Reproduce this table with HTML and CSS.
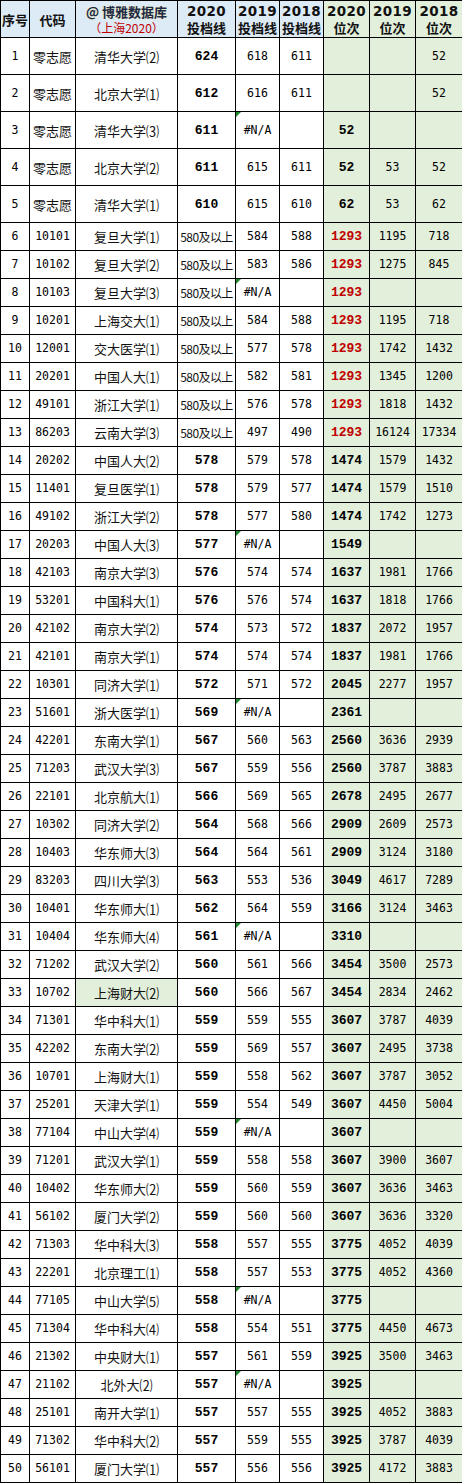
FILE: index.html
```html
<!DOCTYPE html>
<html lang="zh-CN">
<head>
<meta charset="utf-8">
<title>投档线</title>
<link rel="stylesheet" href="styles.css">
</head>
<body>
<table class="sheet">
<colgroup>
<col class="w-no"><col class="w-code"><col class="w-name"><col class="w-s20"><col class="w-s19"><col class="w-s18"><col class="w-r20"><col class="w-r19"><col class="w-r18">
</colgroup>
<thead>
<tr class="head">
<th class="hb">序号</th>
<th class="hb">代码</th>
<th class="hb brand"><span class="brand-top">@ 博雅数据库</span><span class="brand-sub">（上海2020）</span></th>
<th class="hb"><span class="yr">2020</span><span class="lbl">投档线</span></th>
<th class="hb"><span class="yr">2019</span><span class="lbl">投档线</span></th>
<th class="hb"><span class="yr">2018</span><span class="lbl">投档线</span></th>
<th class="hg"><span class="yr">2020</span><span class="lbl">位次</span></th>
<th class="hg"><span class="yr">2019</span><span class="lbl">位次</span></th>
<th class="hg"><span class="yr">2018</span><span class="lbl">位次</span></th>
</tr>
</thead>
<tbody>
<tr class="tall"><td class="n">1</td><td class="t">零志愿</td><td class="t">清华大学⑵</td><td class="n b">624</td><td class="n">618</td><td class="n">611</td><td class="g"></td><td class="g"></td><td class="g n">52</td></tr>
<tr class="tall"><td class="n">2</td><td class="t">零志愿</td><td class="t">北京大学⑴</td><td class="n b">612</td><td class="n">616</td><td class="n">611</td><td class="g"></td><td class="g"></td><td class="g n">52</td></tr>
<tr class="tall"><td class="n">3</td><td class="t">零志愿</td><td class="t">清华大学⑶</td><td class="n b">611</td><td class="n na">#N/A</td><td></td><td class="g n b">52</td><td class="g"></td><td class="g"></td></tr>
<tr class="tall"><td class="n">4</td><td class="t">零志愿</td><td class="t">北京大学⑵</td><td class="n b">611</td><td class="n">615</td><td class="n">611</td><td class="g n b">52</td><td class="g n">53</td><td class="g n">52</td></tr>
<tr class="tall"><td class="n">5</td><td class="t">零志愿</td><td class="t">清华大学⑴</td><td class="n b">610</td><td class="n">615</td><td class="n">610</td><td class="g n b">62</td><td class="g n">53</td><td class="g n">62</td></tr>
<tr><td class="n">6</td><td class="n">10101</td><td class="t">复旦大学⑴</td><td class="t up">580及以上</td><td class="n">584</td><td class="n">588</td><td class="g n b r">1293</td><td class="g n">1195</td><td class="g n">718</td></tr>
<tr><td class="n">7</td><td class="n">10102</td><td class="t">复旦大学⑵</td><td class="t up">580及以上</td><td class="n">583</td><td class="n">586</td><td class="g n b r">1293</td><td class="g n">1275</td><td class="g n">845</td></tr>
<tr><td class="n">8</td><td class="n">10103</td><td class="t">复旦大学⑶</td><td class="t up">580及以上</td><td class="n na">#N/A</td><td></td><td class="g n b r">1293</td><td class="g"></td><td class="g"></td></tr>
<tr><td class="n">9</td><td class="n">10201</td><td class="t">上海交大⑴</td><td class="t up">580及以上</td><td class="n">584</td><td class="n">588</td><td class="g n b r">1293</td><td class="g n">1195</td><td class="g n">718</td></tr>
<tr><td class="n">10</td><td class="n">12001</td><td class="t">交大医学⑴</td><td class="t up">580及以上</td><td class="n">577</td><td class="n">578</td><td class="g n b r">1293</td><td class="g n">1742</td><td class="g n">1432</td></tr>
<tr><td class="n">11</td><td class="n">20201</td><td class="t">中国人大⑴</td><td class="t up">580及以上</td><td class="n">582</td><td class="n">581</td><td class="g n b r">1293</td><td class="g n">1345</td><td class="g n">1200</td></tr>
<tr><td class="n">12</td><td class="n">49101</td><td class="t">浙江大学⑴</td><td class="t up">580及以上</td><td class="n">576</td><td class="n">578</td><td class="g n b r">1293</td><td class="g n">1818</td><td class="g n">1432</td></tr>
<tr><td class="n">13</td><td class="n">86203</td><td class="t">云南大学⑶</td><td class="t up">580及以上</td><td class="n">497</td><td class="n">490</td><td class="g n b r">1293</td><td class="g n">16124</td><td class="g n">17334</td></tr>
<tr><td class="n">14</td><td class="n">20202</td><td class="t">中国人大⑵</td><td class="n b">578</td><td class="n">579</td><td class="n">578</td><td class="g n b">1474</td><td class="g n">1579</td><td class="g n">1432</td></tr>
<tr><td class="n">15</td><td class="n">11401</td><td class="t">复旦医学⑴</td><td class="n b">578</td><td class="n">579</td><td class="n">577</td><td class="g n b">1474</td><td class="g n">1579</td><td class="g n">1510</td></tr>
<tr><td class="n">16</td><td class="n">49102</td><td class="t">浙江大学⑵</td><td class="n b">578</td><td class="n">577</td><td class="n">580</td><td class="g n b">1474</td><td class="g n">1742</td><td class="g n">1273</td></tr>
<tr><td class="n">17</td><td class="n">20203</td><td class="t">中国人大⑶</td><td class="n b">577</td><td class="n na">#N/A</td><td></td><td class="g n b">1549</td><td class="g"></td><td class="g"></td></tr>
<tr><td class="n">18</td><td class="n">42103</td><td class="t">南京大学⑶</td><td class="n b">576</td><td class="n">574</td><td class="n">574</td><td class="g n b">1637</td><td class="g n">1981</td><td class="g n">1766</td></tr>
<tr><td class="n">19</td><td class="n">53201</td><td class="t">中国科大⑴</td><td class="n b">576</td><td class="n">576</td><td class="n">574</td><td class="g n b">1637</td><td class="g n">1818</td><td class="g n">1766</td></tr>
<tr><td class="n">20</td><td class="n">42102</td><td class="t">南京大学⑵</td><td class="n b">574</td><td class="n">573</td><td class="n">572</td><td class="g n b">1837</td><td class="g n">2072</td><td class="g n">1957</td></tr>
<tr><td class="n">21</td><td class="n">42101</td><td class="t">南京大学⑴</td><td class="n b">574</td><td class="n">574</td><td class="n">574</td><td class="g n b">1837</td><td class="g n">1981</td><td class="g n">1766</td></tr>
<tr><td class="n">22</td><td class="n">10301</td><td class="t">同济大学⑴</td><td class="n b">572</td><td class="n">571</td><td class="n">572</td><td class="g n b">2045</td><td class="g n">2277</td><td class="g n">1957</td></tr>
<tr><td class="n">23</td><td class="n">51601</td><td class="t">浙大医学⑴</td><td class="n b">569</td><td class="n na">#N/A</td><td></td><td class="g n b">2361</td><td class="g"></td><td class="g"></td></tr>
<tr><td class="n">24</td><td class="n">42201</td><td class="t">东南大学⑴</td><td class="n b">567</td><td class="n">560</td><td class="n">563</td><td class="g n b">2560</td><td class="g n">3636</td><td class="g n">2939</td></tr>
<tr><td class="n">25</td><td class="n">71203</td><td class="t">武汉大学⑶</td><td class="n b">567</td><td class="n">559</td><td class="n">556</td><td class="g n b">2560</td><td class="g n">3787</td><td class="g n">3883</td></tr>
<tr><td class="n">26</td><td class="n">22101</td><td class="t">北京航大⑴</td><td class="n b">566</td><td class="n">569</td><td class="n">565</td><td class="g n b">2678</td><td class="g n">2495</td><td class="g n">2677</td></tr>
<tr><td class="n">27</td><td class="n">10302</td><td class="t">同济大学⑵</td><td class="n b">564</td><td class="n">568</td><td class="n">566</td><td class="g n b">2909</td><td class="g n">2609</td><td class="g n">2573</td></tr>
<tr><td class="n">28</td><td class="n">10403</td><td class="t">华东师大⑶</td><td class="n b">564</td><td class="n">564</td><td class="n">561</td><td class="g n b">2909</td><td class="g n">3124</td><td class="g n">3180</td></tr>
<tr><td class="n">29</td><td class="n">83203</td><td class="t">四川大学⑶</td><td class="n b">563</td><td class="n">553</td><td class="n">536</td><td class="g n b">3049</td><td class="g n">4617</td><td class="g n">7289</td></tr>
<tr><td class="n">30</td><td class="n">10401</td><td class="t">华东师大⑴</td><td class="n b">562</td><td class="n">564</td><td class="n">559</td><td class="g n b">3166</td><td class="g n">3124</td><td class="g n">3463</td></tr>
<tr><td class="n">31</td><td class="n">10404</td><td class="t">华东师大⑷</td><td class="n b">561</td><td class="n na">#N/A</td><td></td><td class="g n b">3310</td><td class="g"></td><td class="g"></td></tr>
<tr><td class="n">32</td><td class="n">71202</td><td class="t">武汉大学⑵</td><td class="n b">560</td><td class="n">561</td><td class="n">566</td><td class="g n b">3454</td><td class="g n">3500</td><td class="g n">2573</td></tr>
<tr><td class="n">33</td><td class="n">10702</td><td class="t g">上海财大⑵</td><td class="n b">560</td><td class="n">566</td><td class="n">567</td><td class="g n b">3454</td><td class="g n">2834</td><td class="g n">2462</td></tr>
<tr><td class="n">34</td><td class="n">71301</td><td class="t">华中科大⑴</td><td class="n b">559</td><td class="n">559</td><td class="n">555</td><td class="g n b">3607</td><td class="g n">3787</td><td class="g n">4039</td></tr>
<tr><td class="n">35</td><td class="n">42202</td><td class="t">东南大学⑵</td><td class="n b">559</td><td class="n">569</td><td class="n">557</td><td class="g n b">3607</td><td class="g n">2495</td><td class="g n">3738</td></tr>
<tr><td class="n">36</td><td class="n">10701</td><td class="t">上海财大⑴</td><td class="n b">559</td><td class="n">558</td><td class="n">562</td><td class="g n b">3607</td><td class="g n">3787</td><td class="g n">3052</td></tr>
<tr><td class="n">37</td><td class="n">25201</td><td class="t">天津大学⑴</td><td class="n b">559</td><td class="n">554</td><td class="n">549</td><td class="g n b">3607</td><td class="g n">4450</td><td class="g n">5004</td></tr>
<tr><td class="n">38</td><td class="n">77104</td><td class="t">中山大学⑷</td><td class="n b">559</td><td class="n na">#N/A</td><td></td><td class="g n b">3607</td><td class="g"></td><td class="g"></td></tr>
<tr><td class="n">39</td><td class="n">71201</td><td class="t">武汉大学⑴</td><td class="n b">559</td><td class="n">558</td><td class="n">558</td><td class="g n b">3607</td><td class="g n">3900</td><td class="g n">3607</td></tr>
<tr><td class="n">40</td><td class="n">10402</td><td class="t">华东师大⑵</td><td class="n b">559</td><td class="n">560</td><td class="n">559</td><td class="g n b">3607</td><td class="g n">3636</td><td class="g n">3463</td></tr>
<tr><td class="n">41</td><td class="n">56102</td><td class="t">厦门大学⑵</td><td class="n b">559</td><td class="n">560</td><td class="n">560</td><td class="g n b">3607</td><td class="g n">3636</td><td class="g n">3320</td></tr>
<tr><td class="n">42</td><td class="n">71303</td><td class="t">华中科大⑶</td><td class="n b">558</td><td class="n">557</td><td class="n">555</td><td class="g n b">3775</td><td class="g n">4052</td><td class="g n">4039</td></tr>
<tr><td class="n">43</td><td class="n">22201</td><td class="t">北京理工⑴</td><td class="n b">558</td><td class="n">557</td><td class="n">553</td><td class="g n b">3775</td><td class="g n">4052</td><td class="g n">4360</td></tr>
<tr><td class="n">44</td><td class="n">77105</td><td class="t">中山大学⑸</td><td class="n b">558</td><td class="n na">#N/A</td><td></td><td class="g n b">3775</td><td class="g"></td><td class="g"></td></tr>
<tr><td class="n">45</td><td class="n">71304</td><td class="t">华中科大⑷</td><td class="n b">558</td><td class="n">554</td><td class="n">551</td><td class="g n b">3775</td><td class="g n">4450</td><td class="g n">4673</td></tr>
<tr><td class="n">46</td><td class="n">21302</td><td class="t">中央财大⑴</td><td class="n b">557</td><td class="n">561</td><td class="n">559</td><td class="g n b">3925</td><td class="g n">3500</td><td class="g n">3463</td></tr>
<tr><td class="n">47</td><td class="n">21102</td><td class="t">北外大⑵</td><td class="n b">557</td><td class="n na">#N/A</td><td></td><td class="g n b">3925</td><td class="g"></td><td class="g"></td></tr>
<tr><td class="n">48</td><td class="n">25101</td><td class="t">南开大学⑴</td><td class="n b">557</td><td class="n">557</td><td class="n">555</td><td class="g n b">3925</td><td class="g n">4052</td><td class="g n">3883</td></tr>
<tr><td class="n">49</td><td class="n">71302</td><td class="t">华中科大⑵</td><td class="n b">557</td><td class="n">559</td><td class="n">555</td><td class="g n b">3925</td><td class="g n">3787</td><td class="g n">4039</td></tr>
<tr><td class="n">50</td><td class="n">56101</td><td class="t">厦门大学⑴</td><td class="n b">557</td><td class="n">556</td><td class="n">556</td><td class="g n b">3925</td><td class="g n">4172</td><td class="g n">3883</td></tr>
</tbody>
</table>
</body>
</html>
```
FILE: styles.css
```css
html, body {
  margin: 0;
  padding: 0;
  background: #ffffff;
}

.sheet {
  border-collapse: collapse;
  table-layout: fixed;
  width: 462px;
  color: #000;
  font-family: "Noto Sans CJK SC", sans-serif;
}

.w-no { width: 29px; }
.w-code { width: 46px; }
.w-name { width: 102px; }
.w-s20 { width: 58px; }
.w-s19 { width: 44px; }
.w-s18 { width: 44px; }
.w-r20 { width: 46px; }
.w-r19 { width: 46px; }
.w-r18 { width: 47px; }

.sheet th,
.sheet td {
  border: 1px solid #000;
  padding: 0;
  text-align: center;
  vertical-align: middle;
  white-space: nowrap;
  overflow: hidden;
  position: relative;
}

.sheet tr { height: 28px; }
.sheet tr.head,
.sheet tr.tall { height: 37px; }

.sheet th {
  font-size: 13px;
  font-weight: bold;
  line-height: 17px;
  color: #111;
}

.hb { background: #ddebf7; }
.hg { background: #e2efda; }

.yr {
  display: block;
  font-family: "DejaVu Sans", sans-serif;
  font-size: 13.5px;
  line-height: 16px;
  letter-spacing: 0.3px;
}

.lbl {
  display: block;
  line-height: 17px;
}

.brand-top {
  display: block;
  color: #1c2a48;
  font-weight: bold;
  font-size: 13px;
  line-height: 17px;
  text-shadow: 0 0 2px #f3e6a0;
}

.brand-sub {
  display: block;
  color: #c00000;
  font-weight: normal;
  font-size: 12px;
  line-height: 16px;
}

.t {
  font-size: 13px;
  line-height: 17px;
  color: #111;
}

.up {
  font-size: 12px;
  letter-spacing: -0.6px;
  text-align: left;
  padding-left: 1px;
}

.n {
  font-family: "DejaVu Sans Mono", monospace;
  font-size: 11.5px;
  line-height: 15px;
}

.n.b {
  font-family: "Liberation Mono", monospace;
  font-weight: bold;
  font-size: 13px;
}

.r { color: #c00000; }

.g { background: #e2efda; }

.na::before {
  content: "";
  position: absolute;
  left: 0;
  top: 0;
  width: 0;
  height: 0;
  border-top: 5px solid #1e8a2e;
  border-right: 5px solid transparent;
}
```
